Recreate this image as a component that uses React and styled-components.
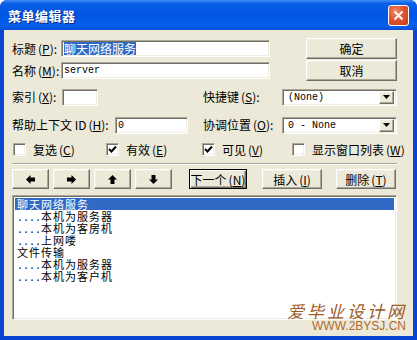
import React from "react";
import styled, { createGlobalStyle, css } from "styled-components";

const GlobalStyle = createGlobalStyle`
  html, body {
    margin: 0;
    padding: 0;
    background: #ffffff;
  }
  body {
    font-family: "Noto Sans CJK SC", "Liberation Sans", sans-serif;
    font-size: 12px;
    color: #000;
  }
`;

const sunken = css`
  box-sizing: border-box;
  background: #ffffff;
  border: 1px solid;
  border-color: #aca899 #ffffff #ffffff #aca899;
  box-shadow: inset 1px 1px 0 #716f64, inset -1px -1px 0 #f1efe2;
`;

const raised = css`
  box-sizing: border-box;
  background: #ece9d8;
  border: 1px solid;
  border-color: #ffffff #716f64 #716f64 #ffffff;
  box-shadow: inset -1px -1px 0 #aca899, inset 1px 1px 0 #f1efe2;
`;

const Window = styled.div`
  position: relative;
  width: 417px;
  height: 340px;
  display: flex;
  flex-direction: column;
  background: #0846d2;
  border-radius: 7px 7px 0 0;
  overflow: hidden;
`;

const TitleBar = styled.div`
  height: 30px;
  flex: none;
  display: flex;
  align-items: center;
  justify-content: space-between;
  padding: 0 8px 0 8px;
  box-sizing: border-box;
  background: linear-gradient(
    to bottom,
    #3d8df5 0%,
    #0a5fe8 12%,
    #0054e3 45%,
    #0760ec 85%,
    #0a4fd8 100%
  );
`;

const Title = styled.div`
  color: #fff;
  font-weight: 700;
  font-size: 13px;
  letter-spacing: 0.5px;
  text-shadow: 1px 1px 0 #0a2a8a;
`;

const CloseButton = styled.div`
  width: 21px;
  height: 21px;
  box-sizing: border-box;
  border: 1px solid #fff;
  border-radius: 3px;
  background: radial-gradient(circle at 35% 30%, #f08a68 0%, #e0552f 45%, #c43d16 100%);
  display: flex;
  align-items: center;
  justify-content: center;
`;

const Client = styled.div`
  flex: 1;
  margin: 0 4px 4px 4px;
  background: #ece9d8;
  padding: 8px 16px 0 8px;
  box-sizing: border-box;
  display: flex;
  flex-direction: column;
`;

const TopGrid = styled.div`
  display: grid;
  grid-template-columns: 258px 1fr 91px;
  grid-auto-rows: 21px;
  row-gap: 1px;
`;

const FieldRow = styled.div`
  grid-column: 1;
  display: flex;
  align-items: center;
`;

const Label = styled.span`
  flex: none;
  width: ${(p) => p.$w}px;
  white-space: nowrap;
  line-height: 14px;
`;

const TextBox = styled.div`
  ${sunken};
  height: 17px;
  width: ${(p) => (p.$w ? `${p.$w}px` : "auto")};
  flex: ${(p) => (p.$w ? "none" : "1")};
  padding: 0 2px;
  display: flex;
  align-items: center;
  white-space: nowrap;
  overflow: hidden;
`;

const Selected = styled.span`
  background: #316ac5;
  color: #fff;
  line-height: 13px;
`;

const Mono = styled.span`
  font-family: "Liberation Mono", "DejaVu Sans Mono", monospace;
  font-size: 10px;
`;

const Mnemonic = styled.span`
  margin-left: 2px;
`;

const Button = styled.div`
  ${raised};
  height: ${(p) => p.$h || 20}px;
  width: ${(p) => p.$w}px;
  flex: none;
  display: flex;
  align-items: center;
  justify-content: center;
  white-space: nowrap;
  margin-left: ${(p) => p.$ml || 0}px;
  ${(p) =>
    p.$default &&
    css`
      border-color: #000;
      box-shadow: inset 1px 1px 0 #ffffff, inset -1px -1px 0 #716f64,
        inset -2px -2px 0 #aca899;
    `}
`;

const SideButton = styled(Button)`
  grid-column: 3;
  width: auto;
  height: 21px;
`;

const SplitRow = styled.div`
  display: grid;
  grid-template-columns: 191px 79px 1fr;
  align-items: center;
  height: 18px;
  margin-top: ${(p) => p.$mt}px;
`;

const Cell = styled.div`
  display: flex;
  align-items: center;
`;

const Combo = styled.div`
  ${sunken};
  height: 17px;
  display: flex;
  align-items: center;
  padding: 2px 2px 2px 5px;
`;

const ComboText = styled(Mono)`
  flex: 1;
`;

const DropButton = styled.div`
  ${raised};
  width: 15px;
  height: 13px;
  display: flex;
  align-items: center;
  justify-content: center;
`;

const CheckRow = styled.div`
  display: grid;
  grid-template-columns: 93px 96px 90px 1fr;
  margin: 7px 0 0 1px;
  height: 13px;
`;

const CheckItem = styled.div`
  display: flex;
  align-items: center;
  gap: 7px;
  white-space: nowrap;
`;

const CheckBox = styled.div`
  ${sunken};
  width: 13px;
  height: 13px;
  flex: none;
  display: flex;
  align-items: center;
  justify-content: center;
`;

const Separator = styled.div`
  margin-top: 9px;
  height: 0;
  border-top: 1px solid #aca899;
  border-bottom: 1px solid #ffffff;
`;

const ButtonRow = styled.div`
  display: flex;
  margin-top: 4px;
`;

const ArrowGroup = styled.div`
  display: flex;
  gap: 4px;
`;

const ListBox = styled.div`
  ${sunken};
  margin-top: 6px;
  height: 125px;
  padding: 2px;
`;

const ListItem = styled.div`
  height: 12px;
  line-height: 12px;
  font-size: 11px;
  letter-spacing: 1px;
  padding-left: 2px;
  white-space: pre;
  ${(p) =>
    p.$active &&
    css`
      background: #316ac5;
      color: #fff;
    `}
`;

const Dots = styled(Mono)`
  letter-spacing: 0;
`;

const Watermark = styled.div`
  position: absolute;
  right: 10px;
  bottom: 8px;
  display: flex;
  flex-direction: column;
  align-items: flex-end;
  pointer-events: none;
`;

const WatermarkTitle = styled.div`
  font-family: "Noto Sans CJK SC", sans-serif;
  font-size: 17px;
  font-style: italic;
  letter-spacing: 3px;
  line-height: 19px;
  color: #9c5a26;
`;

const WatermarkUrl = styled.div`
  font-family: "Liberation Sans", Arial, sans-serif;
  font-size: 12px;
  line-height: 12px;
  color: #b06a2e;
  margin-right: 1px;
`;

const Key = ({ k }) => (
  <Mnemonic>
    (<u>{k}</u>)
  </Mnemonic>
);

const Check = () => (
  <svg width="9" height="9" viewBox="0 0 9 9">
    <polyline points="1,4 3.5,6.5 8,1.5" fill="none" stroke="#000" strokeWidth="2" />
  </svg>
);

const DownTriangle = () => (
  <svg width="7" height="4" viewBox="0 0 7 4">
    <polygon points="0,0 7,0 3.5,4" fill="#000" />
  </svg>
);

const Arrow = ({ dir }) => {
  const rot = { left: 0, up: 90, right: 180, down: 270 }[dir];
  return (
    <svg width="9" height="9" viewBox="0 0 9 9" style={{ transform: `rotate(${rot}deg)` }}>
      <polygon points="0,4.5 4.5,0 4.5,2.5 9,2.5 9,6.5 4.5,6.5 4.5,9" fill="#000" />
    </svg>
  );
};

const items = [
  { text: "聊天网络服务", active: true },
  { dots: "....", text: "本机为服务器" },
  { dots: "....", text: "本机为客房机" },
  { dots: "....", text: "上网喽" },
  { text: "文件传输" },
  { dots: "....", text: "本机为服务器" },
  { dots: "....", text: "本机为客户机" },
];

export default function App() {
  return (
    <>
      <GlobalStyle />
      <Window>
        <TitleBar>
          <Title>菜单编辑器</Title>
          <CloseButton>
            <svg width="11" height="11" viewBox="0 0 11 11">
              <path d="M1.5 1.5 L9.5 9.5 M9.5 1.5 L1.5 9.5" stroke="#fff" strokeWidth="2" />
            </svg>
          </CloseButton>
        </TitleBar>
        <Client>
          <TopGrid>
            <FieldRow>
              <Label $w={49}>
                标题<Key k="P" />:
              </Label>
              <TextBox>
                <Selected>聊天网络服务</Selected>
              </TextBox>
            </FieldRow>
            <SideButton>确定</SideButton>
            <FieldRow>
              <Label $w={49}>
                名称<Key k="M" />:
              </Label>
              <TextBox>
                <Mono>server</Mono>
              </TextBox>
            </FieldRow>
            <SideButton>取消</SideButton>
          </TopGrid>

          <SplitRow $mt={7}>
            <Cell>
              <Label $w={50}>
                索引<Key k="X" />:
              </Label>
              <TextBox $w={36} />
            </Cell>
            <Label>
              快捷键<Key k="S" />:
            </Label>
            <Combo>
              <ComboText>(None)</ComboText>
              <DropButton>
                <DownTriangle />
              </DropButton>
            </Combo>
          </SplitRow>

          <SplitRow $mt={10}>
            <Cell>
              <Label $w={103}>
                帮助上下文 ID<Key k="H" />:
              </Label>
              <TextBox $w={73}>
                <Mono>0</Mono>
              </TextBox>
            </Cell>
            <Label>
              协调位置<Key k="O" />:
            </Label>
            <Combo>
              <ComboText>0 - None</ComboText>
              <DropButton>
                <DownTriangle />
              </DropButton>
            </Combo>
          </SplitRow>

          <CheckRow>
            <CheckItem>
              <CheckBox />
              <span>
                复选<Key k="C" />
              </span>
            </CheckItem>
            <CheckItem>
              <CheckBox>
                <Check />
              </CheckBox>
              <span>
                有效<Key k="E" />
              </span>
            </CheckItem>
            <CheckItem>
              <CheckBox>
                <Check />
              </CheckBox>
              <span>
                可见<Key k="V" />
              </span>
            </CheckItem>
            <CheckItem>
              <CheckBox />
              <span>
                显示窗口列表<Key k="W" />
              </span>
            </CheckItem>
          </CheckRow>

          <Separator />

          <ButtonRow>
            <ArrowGroup>
              <Button $w={37}>
                <Arrow dir="left" />
              </Button>
              <Button $w={37}>
                <Arrow dir="right" />
              </Button>
              <Button $w={37}>
                <Arrow dir="up" />
              </Button>
              <Button $w={37}>
                <Arrow dir="down" />
              </Button>
            </ArrowGroup>
            <Button $w={58} $ml={17} $default>
              下一个<Key k="N" />
            </Button>
            <Button $w={60} $ml={15}>
              插入<Key k="I" />
            </Button>
            <Button $w={60} $ml={14}>
              删除<Key k="T" />
            </Button>
          </ButtonRow>

          <ListBox>
            {items.map((it, i) => (
              <ListItem key={i} $active={it.active}>
                {it.dots && <Dots>{it.dots}</Dots>}
                {it.text}
              </ListItem>
            ))}
          </ListBox>
        </Client>
        <Watermark>
          <WatermarkTitle>爱毕业设计网</WatermarkTitle>
          <WatermarkUrl>WWW.2BYSJ.CN</WatermarkUrl>
        </Watermark>
      </Window>
    </>
  );
}
